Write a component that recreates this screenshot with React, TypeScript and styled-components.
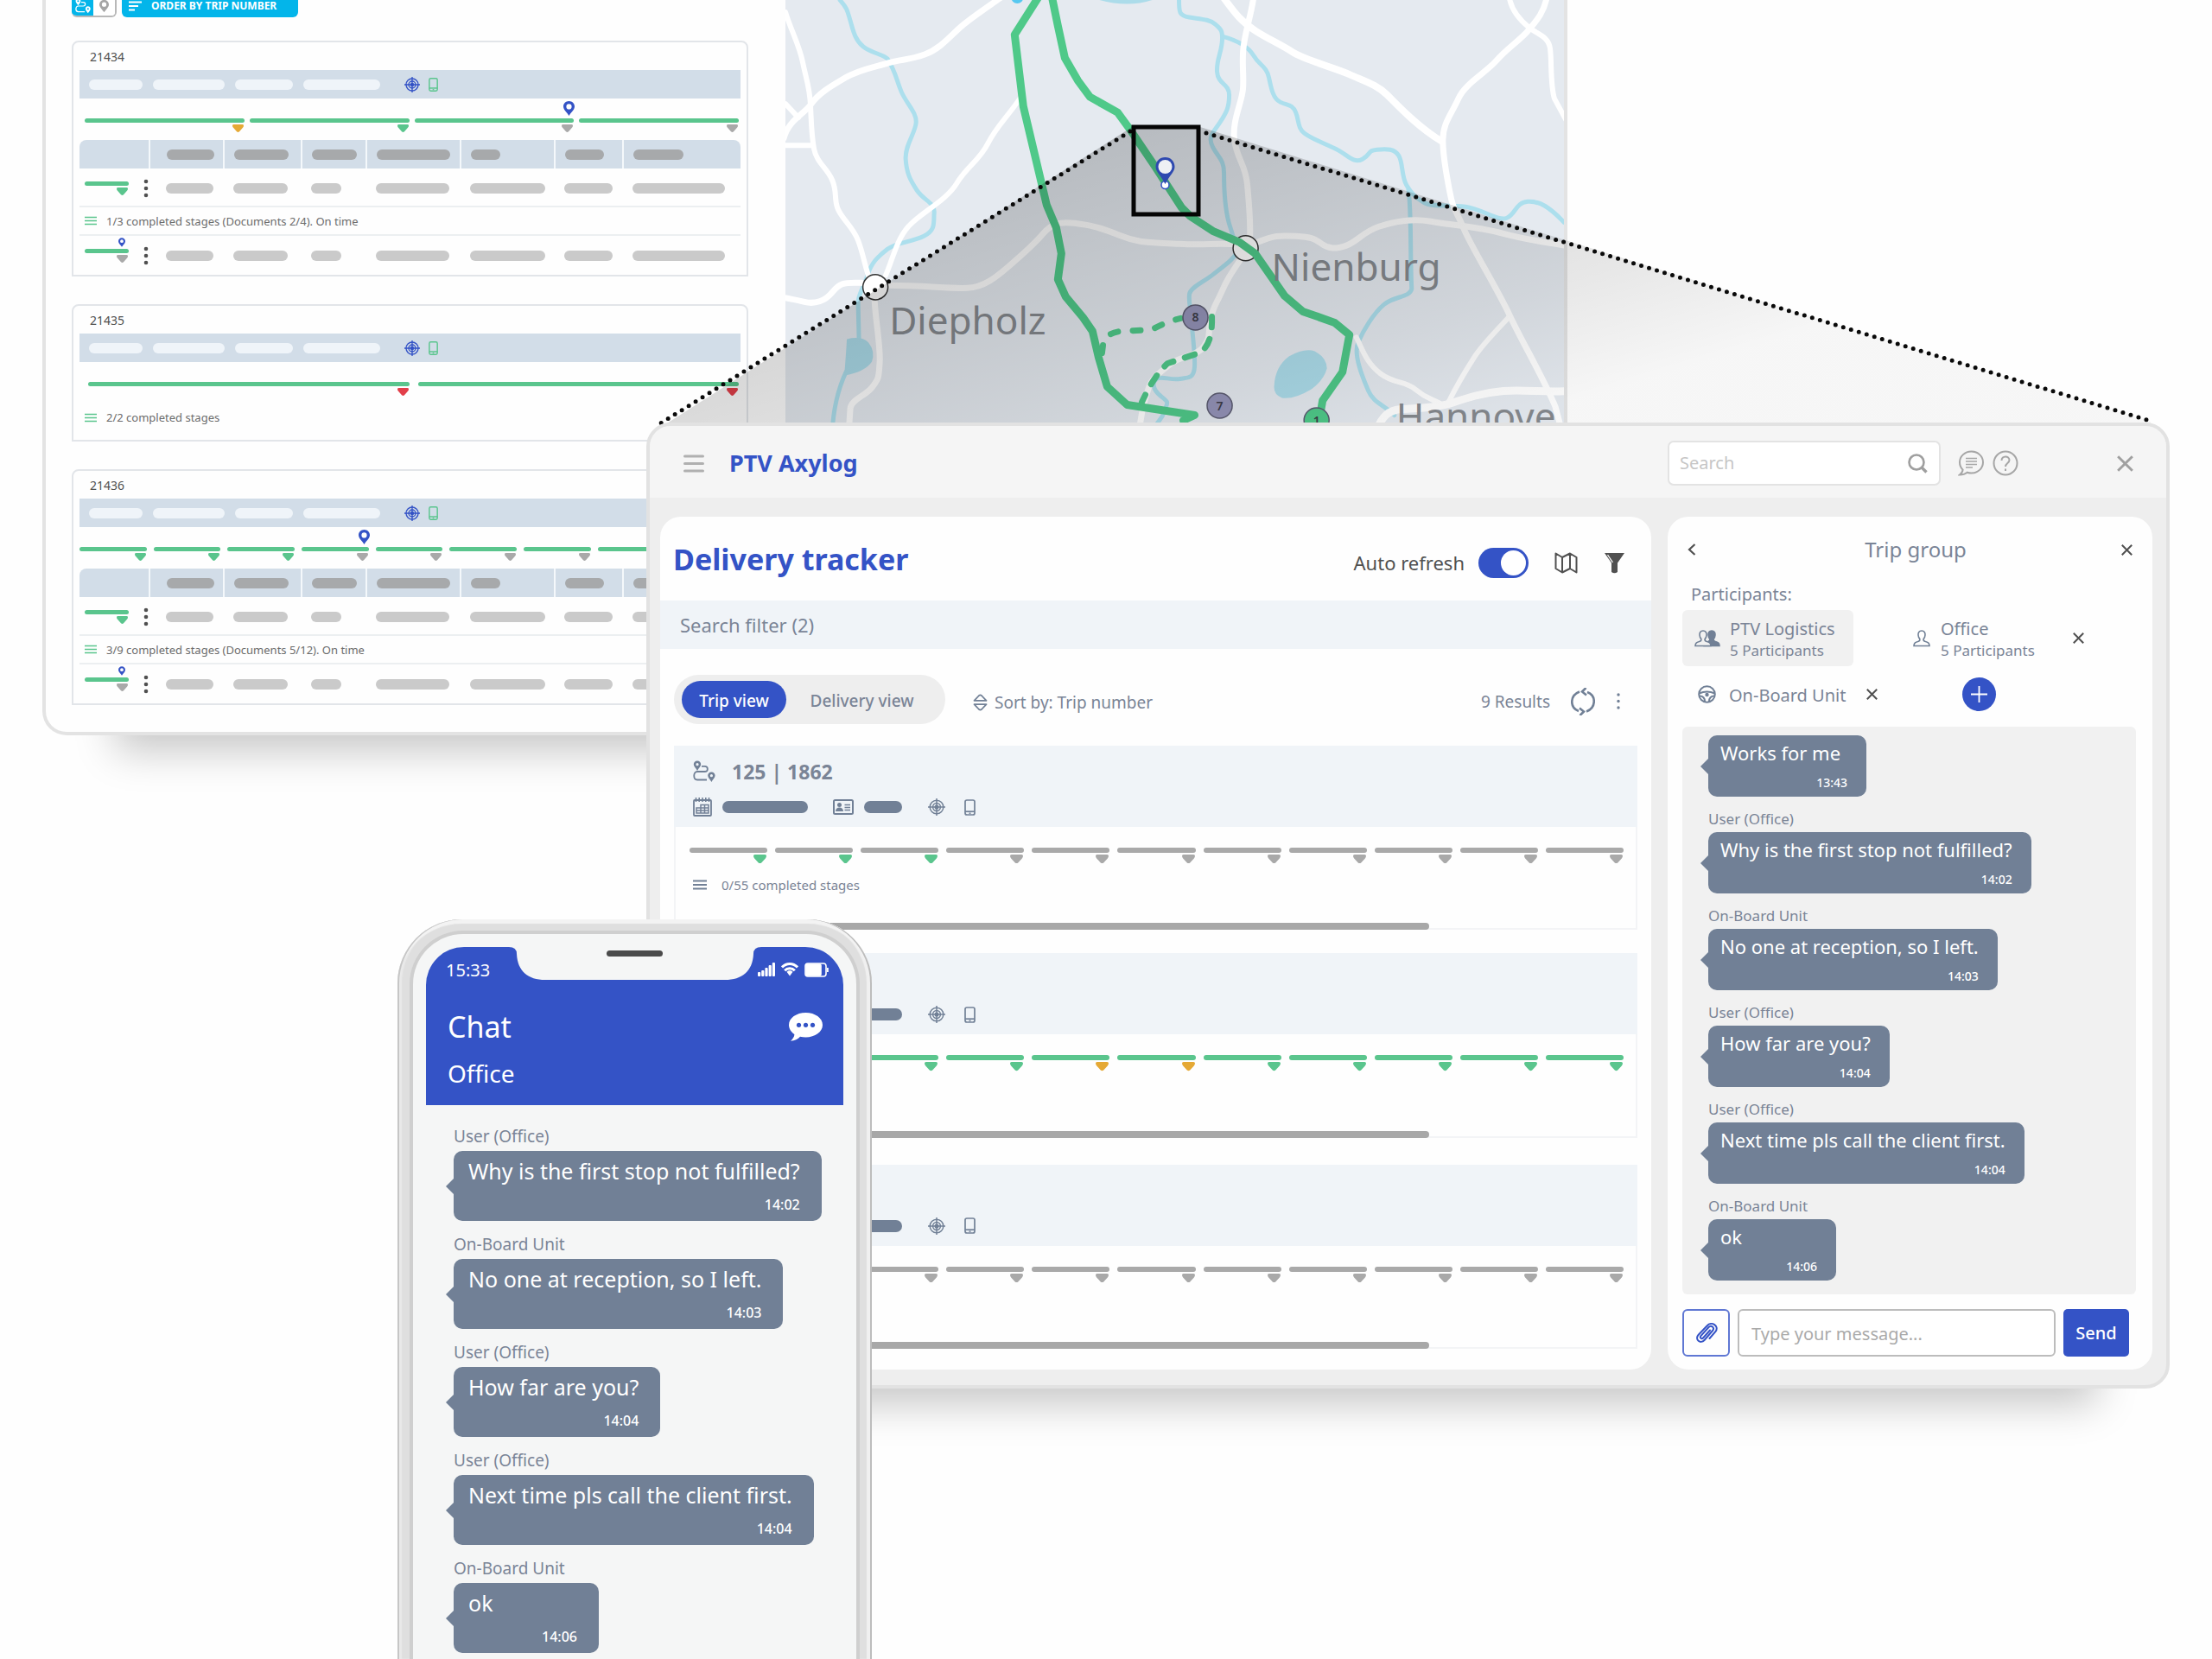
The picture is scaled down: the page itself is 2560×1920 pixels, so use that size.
import React from "react";
import styled, { createGlobalStyle, css } from "styled-components";

/* ---------- theme ---------- */

const color = {
  blue: "#3453c6",
  green: "#5ac58d",
  orange: "#e5a935",
  red: "#e23f4a",
  grey: "#a9a9a9",
  slate: "#718096",
  text: "#7a8496",
  dark: "#505050",
  band: "#d2dde8",
  pale: "#f0f4f8",
};

const GlobalStyle = createGlobalStyle`
  *, *::before, *::after { box-sizing: border-box; }
  body {
    margin: 0;
    background: #fefefe;
    font-family: "Noto Sans", "Open Sans", sans-serif;
    color: ${color.text};
  }
  button, input { font: inherit; color: inherit; }
  h1, h2, h3, p { margin: 0; font-size: inherit; font-weight: inherit; }
`;

const Stage = styled.main`
  position: relative;
  min-height: 100vh;
  overflow: hidden;
`;

const IconButton = styled.button`
  display: inline-flex;
  align-items: center;
  justify-content: center;
  padding: 0;
  border: 0;
  background: none;
  cursor: pointer;
`;

/* ---------- icons ---------- */

type IconProps = { w?: number; h?: number; c?: string };

const Crosshair = ({ w = 18, c = color.slate }: IconProps) => (
  <svg width={w} height={w} viewBox="0 0 20 20" fill="none" stroke={c} strokeWidth="1.5">
    <circle cx="10" cy="10" r="7.8" />
    <circle cx="10" cy="10" r="4.4" />
    <path d="M10 0v20M0 10h20" />
    <circle cx="10" cy="10" r="1.8" fill={c} />
  </svg>
);

const PhoneIcon = ({ w = 13, h = 19, c = color.slate }: IconProps) => (
  <svg width={w} height={h} viewBox="0 0 13 19" fill="none" stroke={c} strokeWidth="1.7">
    <rect x="1" y="1" width="11" height="17" rx="2" />
    <path d="M1 14.2h11" />
    <path d="M5.5 16.2h2" strokeWidth="1.4" />
  </svg>
);

const Lines = ({ w = 16, h = 12, c = color.slate }: IconProps) => (
  <svg width={w} height={h} viewBox="0 0 16 12" fill="none" stroke={c} strokeWidth="1.8">
    <path d="M0 1.5h16M0 6h16M0 10.5h16" />
  </svg>
);

const MarkerShape = ({ w = 13, c = color.grey }: IconProps) => (
  <svg width={w} height={(w * 9) / 13} viewBox="0 0 13 9" fill={c}>
    <path d="M1.5 0h10Q13 0 13 1.4q0 1.4-1 2.4L8 8.2Q6.500 9.600 5 8.200L1 3.800Q0 2.800 0 1.400 0 0 1.500 0z" />
  </svg>
);

const Pin = ({ w = 13, h = 17, c = color.blue }: IconProps) => (
  <svg width={w} height={h} viewBox="0 0 13 17">
    <path
      fill={c}
      fillRule="evenodd"
      d="M6.500 0C2.900 0 0 2.800 0 6.300 0 10 4 13 6.500 17 9 13 13 10 13 6.300 13 2.800 10.100 0 6.500 0zm0 3.300a3.100 3.100 0 1 1 0 6.200 3.100 3.100 0 0 1 0-6.200z"
    />
  </svg>
);

const RouteIcon = ({ w = 26, c = color.slate }: IconProps) => (
  <svg width={w} height={w} viewBox="0 0 26 26" fill="none">
    <path
      fill={c}
      fillRule="evenodd"
      d="M5 .5C2.500.5.8 2.300.8 4.600.8 7 3.300 9 5 12c1.700-3 4.200-5 4.200-7.400C9.200 2.300 7.500.5 5 .5zm0 2.600a1.600 1.600 0 1 1 0 3.200 1.600 1.600 0 0 1 0-3.200zM21.400 13.500c-2.500 0-4.200 1.800-4.200 4.100 0 2.400 2.500 4.400 4.200 7.400 1.700-3 4.200-5 4.200-7.400 0-2.300-1.700-4.100-4.200-4.100zm0 2.600a1.600 1.600 0 1 1 0 3.200 1.600 1.600 0 0 1 0-3.200z"
    />
    <path stroke={c} strokeWidth="1.8" d="M10 6.800h3.500c4.500 0 4.500 6.200 0 6.200H5c-5 0-5 9.500 0 9.500h11" />
  </svg>
);

const CalendarIcon = () => (
  <svg width="22" height="22" viewBox="0 0 22 22" fill="none" stroke={color.slate}>
    <rect x="1" y="3" width="20" height="18" rx="1" strokeWidth="1.8" />
    <path d="M3.500 0v5M7.200 0v5M11 0v5M14.800 0v5M18.500 0v5" strokeWidth="1.600" />
    <path d="M4 12h5V8.500h9V18H4zM4 15h14M9 8.500V18M13.500 8.500V18M9 12h9" strokeWidth="1.500" />
  </svg>
);

const IdCardIcon = () => (
  <svg width="24" height="18" viewBox="0 0 24 18" fill="none" stroke={color.slate}>
    <rect x="1" y="1" width="22" height="16" rx="1.500" strokeWidth="2" />
    <circle cx="7.500" cy="6.500" r="2.500" fill={color.slate} stroke="none" />
    <path d="M3 14c0-3 2-4.500 4.500-4.500S12 11 12 14z" fill={color.slate} stroke="none" />
    <path d="M13.500 6.500H20M13.500 9.500H20M13.500 12.500H20" strokeWidth="1.500" />
  </svg>
);

const Cross = ({ w = 13, c = color.dark }: IconProps) => (
  <svg width={w} height={w} viewBox="0 0 13 13" fill="none" stroke={c} strokeWidth="2">
    <path d="M.8.8l11.400 11.400M12.200.8L.8 12.200" />
  </svg>
);

const person = "M11 1C8 1 6.800 3.200 7 6c.1 2 .9 3.500 1.900 4.600.3 1.600-.4 2.200-1.600 2.700C4 14.300 2 15 2 18.500h18c0-3.500-2-4.200-5.300-5.200-1.200-.5-1.900-1.100-1.600-2.700C14.100 9.500 14.900 8 15 6c.2-2.800-1-5-4-5z";

const PersonIcon = () => (
  <svg width="22" height="20" viewBox="0 0 22 20" fill="none" stroke={color.slate} strokeWidth="1.600">
    <path d={person} />
  </svg>
);

const GroupIcon = () => (
  <svg width="30" height="20" viewBox="0 0 30 20" stroke={color.slate} strokeWidth="1.600">
    <g transform="translate(9 0)" fill={color.slate}>
      <path d={person} />
    </g>
    <g transform="translate(-1 0)" fill="#f1f1f1">
      <path d={person} />
    </g>
  </svg>
);

const WheelIcon = () => (
  <svg width="21" height="21" viewBox="0 0 21 21" fill="none" stroke={color.slate} strokeWidth="2">
    <circle cx="10.500" cy="10.500" r="9.300" />
    <path d="M1.500 9.500C7 7.200 14 7.200 19.500 9.500M2 12.500c4.500 0 6 2 6 6.500M19 12.500c-4.500 0-6 2-6 6.500" />
    <circle cx="10.500" cy="11" r="2.200" fill={color.slate} stroke="none" />
  </svg>
);

/* ---------- background window ---------- */

const BackWindow = styled.section`
  position: absolute;
  top: -24px;
  left: 49px;
  right: 746px;
  display: flex;
  border: 4px solid #e3e3e3;
  border-top: 0;
  border-radius: 0 0 28px 28px;
  background: #fefefe;
  box-shadow: 0 102px 44px -84px rgba(0, 0, 0, 0.22);
`;

const OrderList = styled.div`
  flex: none;
  width: 856px;
  padding: 17px 43px 31px 30px;
`;

const OrderTools = styled.div`
  display: flex;
  gap: 6px;
  margin-bottom: 27px;
`;

const ModeSwitch = styled.div`
  display: flex;
  width: 52px;
  height: 27px;
  border: 2px solid #b8b8b8;
  border-left: 0;
  border-radius: 6px;
  overflow: hidden;
`;

const ModeButton = styled(IconButton)<{ $on?: boolean }>`
  flex: 1;
  background: ${(p) => (p.$on ? "#03b5ea" : "#fff")};
`;

const OrderButton = styled.button`
  display: flex;
  align-items: center;
  gap: 11px;
  width: 204px;
  height: 27px;
  padding: 0 8px;
  border: 0;
  border-radius: 6px;
  background: #03b5ea;
  color: #fff;
  font-size: 12px;
  font-weight: 700;
  white-space: nowrap;
`;

const OrderCard = styled.article`
  margin-bottom: 32px;
  padding: 0 7px;
  border: 2px solid #e2e5e9;
  border-radius: 8px 8px 0 0;
  &:last-child {
    margin-bottom: 0;
  }
`;

const OrderTitle = styled.h3`
  padding: 5px 0 3px 12px;
  font-size: 14px;
  line-height: 24px;
  color: ${color.dark};
`;

const OrderBand = styled.div`
  display: flex;
  align-items: center;
  gap: 10px;
  height: 33px;
  padding-left: 11px;
  background: ${color.band};
`;

const Pill = styled.span<{ $w: number; $c: string; $h?: number }>`
  display: block;
  flex: none;
  width: ${(p) => p.$w}px;
  height: ${(p) => p.$h ?? 12}px;
  border-radius: 7px;
  background: ${(p) => p.$c};
`;

const BandPills = styled.div`
  display: flex;
  gap: 12px;
  width: 355px;
`;

const Track = styled.div<{ $gap: number; $pad: string }>`
  display: flex;
  gap: ${(p) => p.$gap}px;
  padding: ${(p) => p.$pad};
`;

const Segment = styled.div`
  position: relative;
  flex: 1;
  display: flex;
  flex-direction: column;
  align-items: flex-end;
  gap: 2px;
  > svg {
    margin-right: 1px;
  }
`;

const Bar = styled.span<{ $c: string; $h: number }>`
  width: 100%;
  height: ${(p) => p.$h}px;
  border-radius: 3px;
  background: ${(p) => p.$c};
`;

const PinSpot = styled.span<{ $small?: boolean }>`
  position: absolute;
  right: ${(p) => (p.$small ? 4 : -1)}px;
  bottom: ${(p) => (p.$small ? 18 : 19)}px;
  line-height: 0;
`;

const StageTable = styled.table`
  width: 100%;
  table-layout: fixed;
  border-collapse: collapse;
  td,
  th {
    padding: 0 0 0 11px;
  }
  th:nth-child(2),
  td:nth-child(2) {
    padding-left: 19px;
  }
`;

const HeadRow = styled.tr`
  height: 33px;
  th {
    background: ${color.band};
    border-left: 2px solid #f4f8fb;
  }
  th:first-child {
    border-left: 0;
    border-top-left-radius: 8px;
  }
  th:last-child {
    border-top-right-radius: 8px;
  }
`;

const BodyRow = styled.tr<{ $h: number }>`
  height: ${(p) => p.$h}px;
  && td:first-child {
    padding-left: 6px;
  }
`;

const StageRow = styled(BodyRow)`
  td {
    padding-top: 3px;
  }
`;

const DividedRow = styled(BodyRow)`
  border-top: 2px solid #eceff1;
  border-bottom: 2px solid #eceff1;
`;

const MiniTrack = styled.div`
  display: flex;
  align-items: center;
  gap: 17px;
  > div {
    flex: none;
    width: 51px;
  }
`;

const StageText = styled.p`
  display: flex;
  align-items: center;
  gap: 11px;
  font-size: 13px;
  line-height: 30px;
  color: #6c6c6c;
`;

const StageTextPadded = styled(StageText)`
  padding: 1px 6px 11px;
`;

const Kebab = ({ c = color.dark, r = 2.3, h = 22 }: { c?: string; r?: number; h?: number }) => (
  <svg width="6" height={h} viewBox={`0 0 6 ${h}`} fill={c}>
    <circle cx="3" cy="3" r={r} />
    <circle cx="3" cy={h / 2} r={r} />
    <circle cx="3" cy={h - 3} r={r} />
  </svg>
);

type Mark = { c: string; pin?: boolean };
const g: Mark = { c: color.green };
const n: Mark = { c: color.grey };

const headPills = [55, 63, 52, 85, 34, 45, 58];
const rowPills = [55, 63, 35, 85, 87, 56, 107];

const Stages = ({ label }: { label: string }) => (
  <StageTable>
    <colgroup>
      {[81, 86, 90, 75, 109, 109, 79].map((w, i) => (
        <col key={i} width={w} />
      ))}
      <col />
    </colgroup>
    <thead>
      <HeadRow>
        <th />
        {headPills.map((w, i) => (
          <th key={i}>
            <Pill $w={w} $c="#a7a9ab" />
          </th>
        ))}
      </HeadRow>
    </thead>
    <tbody>
      <StageRow $h={44}>
        <td>
          <MiniTrack>
            <Segment>
              <Bar $c={color.green} $h={5} />
              <MarkerShape c={color.green} />
            </Segment>
            <Kebab />
          </MiniTrack>
        </td>
        {rowPills.map((w, i) => (
          <td key={i}>
            <Pill $w={w} $c="#cacaca" />
          </td>
        ))}
      </StageRow>
      <DividedRow $h={33}>
        <td colSpan={8}>
          <StageText>
            <Lines w={14} h={11} c={color.green} />
            {label}
          </StageText>
        </td>
      </DividedRow>
      <BodyRow $h={46}>
        <td>
          <MiniTrack>
            <Segment>
              <PinSpot $small>
                <Pin w={8} h={11} />
              </PinSpot>
              <Bar $c={color.green} $h={5} />
              <MarkerShape />
            </Segment>
            <Kebab />
          </MiniTrack>
        </td>
        {rowPills.map((w, i) => (
          <td key={i}>
            <Pill $w={w} $c="#cacaca" />
          </td>
        ))}
      </BodyRow>
    </tbody>
  </StageTable>
);

type OrderProps = {
  id: string;
  label: string;
  marks: Mark[];
  gap: number;
  pad: string;
  table?: boolean;
};

const Order = ({ id, label, marks, gap, pad, table }: OrderProps) => (
  <OrderCard>
    <OrderTitle>{id}</OrderTitle>
    <OrderBand>
      <BandPills>
        {[62, 83, 67, 89].map((w) => (
          <Pill key={w} $w={w} $c="#eff4f9" />
        ))}
      </BandPills>
      <Crosshair w={18} c={color.blue} />
      <PhoneIcon w={11} h={18} c={color.green} />
    </OrderBand>
    <Track $gap={gap} $pad={pad}>
      {marks.map((m, i) => (
        <Segment key={i}>
          {m.pin && (
            <PinSpot>
              <Pin />
            </PinSpot>
          )}
          <Bar $c={color.green} $h={5} />
          <MarkerShape c={m.c} />
        </Segment>
      ))}
    </Track>
    {table ? (
      <Stages label={label} />
    ) : (
      <StageTextPadded>
        <Lines w={14} h={11} c={color.green} />
        {label}
      </StageTextPadded>
    )}
  </OrderCard>
);

const MapPane = styled.div`
  flex: 1;
  min-width: 0;
  position: relative;
  overflow: hidden;
  border-bottom-right-radius: 24px;
  background: #e5eaf0;
  svg {
    display: block;
    margin-top: 24px;
    width: 100%;
  }
`;

const RegionMap = () => (
  <MapPane>
    <svg viewBox="0 0 900 500" fill="none" strokeLinecap="round" strokeLinejoin="round">
      <g stroke="#acdfed" strokeWidth="5">
        <path d="M63 0C72 10 72 14 75 24S80 46 90 54 112 62 118 68C128 84 128 92 134 106S152 130 151 142 138 168 139 184 144 208 152 220 173 234 172 246 174 266 160 273 128 280 118 288 100 302 95 318 84 340 84 350L85 393M70 430Q56 460 54 500" />
        <path d="M455 0C455 14 455 18 467 20S490 22 497 28 505 36 505 44C505 60 498 68 499 83S513 96 513 110 510 130 502 142 488 158 494 170 507 184 507 200 508 244 514 262 518 278 524 286C520 300 508 306 496 316S468 332 467 340 468 354 469 368 474 410 473 424 466 436 456 438 434 434 429 438 424 450 434 458 442 464 438 476 428 486 426 500" />
        <path d="M505 42C520 46 534 52 541 64S556 76 559 90 564 114 572 118 586 120 590 130 592 148 600 154 618 164 634 171 656 190 667 184 672 174 684 173 704 172 709 180 712 204 718 214 728 228 738 234 766 236 786 239 824 256 834 252 844 234 858 233 884 240 900 257M720 218C724 240 722 300 724 334 722 344 704 342 692 352S668 382 662 396 668 438 674 452 692 468 704 480" />
      </g>
      <g fill="#acdcea">
        <path d="M71 392Q88 388 96 396 104 406 100 418 92 430 68 434 70 410 71 392z" />
        <path d="M565 446Q566 424 582 412 600 402 612 406 626 414 626 426 622 440 608 450 588 462 574 460 564 456 565 446z" />
        <path d="M363 0H424Q396 9 363 0z" />
        <circle cx="268" cy="-3" r="7" fill="#57c8f0" />
      </g>
      <g stroke="#fff" strokeWidth="7">
        <path d="M248-2C228 12 216 20 204 30S180 56 161 63 134 68 118 73 86 80 69 90 38 108 30 120 4 138-2 160" />
        <path d="M0 14C6 34 16 52 20 72S28 100 29 122 30 156 33 172 48 194 54 208 56 228 60 240 78 262 84 278 92 308 97 322" strokeWidth="6" />
        <path d="M0 168H32M0 120L15 136" strokeWidth="6" />
        <path d="M116 318C124 300 128 278 142 262S186 232 198 212 224 186 234 166 256 136 271 114" strokeWidth="6" />
        <path d="M88 327C66 326 62 328 54 338S34 352 22 349 8 346-2 344" />
        <path d="M118 330C160 330 190 334 210 333S244 320 258 308 288 282 298 270 318 256 334 258 362 262 386 272 424 280 456 282 500 280 524 283M546 280C564 272 572 272 590 273S612 276 620 282 636 288 648 284 668 268 686 262 724 252 746 256 800 262 830 270 880 280 902 284" />
        <path d="M103 346C104 370 110 400 109 418S108 438 100 448 76 462 75 472L73 502" />
        <path d="M541-2C538 20 530 40 529 60S530 86 529 102 516 140 519 162 532 190 534 214 538 256 537 276" />
        <path d="M526 300C514 318 510 324 504 338S494 354 491 372 492 388 484 400 456 412 446 420 424 436 420 448 410 480 409 502" />
        <path d="M507-2C520 16 528 26 544 36S570 50 586 60 634 78 652 86 684 98 696 110 730 146 758 163" strokeWidth="8" />
        <path d="M880-2C876 16 868 24 859 35S834 56 822 70 786 96 778 114 760 142 760 162 764 200 768 222 776 244 784 264 822 332 837 364 876 436 890 470L898 500" />
        <path d="M837-2C840 14 850 24 860 32S882 42 884 56 884 98 889 114L902 138" strokeWidth="6" />
        <path d="M837 366C822 382 806 398 797 412S774 450 767 464M660 390C668 406 672 420 688 432S716 440 728 450 744 460 756 466" strokeWidth="6" />
        <path d="M682 500C690 480 698 474 712 473S752 472 770 466 806 454 830 452 880 454 902 452" strokeWidth="9" />
      </g>
      <g stroke="#333" strokeWidth="1.500" fill="#fff">
        <circle cx="104" cy="332" r="14.500" />
        <circle cx="532" cy="287" r="14.500" />
      </g>
      <g stroke="#4fc989" strokeWidth="9">
        <path d="M308-4L315 30 323 67 338 93 352 112 384 130 400 152 427 192 458 240 468 250 494 267 525 280 543 293 577 342 598 360 635 373 652 387 644 430 621 463 617 486" />
        <path d="M293-4L265 40 275 123 302 237 313 263 319 293 315 323 324 343 344 367 355 383 362 413 372 447 395 468 473 480 460 486" />
        <path d="M366 408L368 392Q376 384 388 383L424 381Q440 372 457 368" strokeWidth="7" strokeDasharray="9 17" />
        <path d="M493 366Q494 400 478 408L442 420Q426 434 412 465" strokeWidth="7" strokeDasharray="12 14" />
      </g>
      <g stroke="#5c5c72" strokeWidth="1.500" fill="#9493b8">
        <circle cx="474" cy="367" r="14.500" />
        <circle cx="502" cy="469" r="14.500" />
        <circle cx="614" cy="486" r="14.500" fill="#4fc989" />
      </g>
      <g fill="#3c3c48" fontSize="14" fontWeight="600" textAnchor="middle">
        <text x="474" y="372">8</text>
        <text x="502" y="474">7</text>
        <text x="614" y="491">1</text>
      </g>
      <g fill="#85898e" fontSize="44">
        <text x="120" y="387">Diepholz</text>
        <text x="562" y="325">Nienburg</text>
        <text x="706" y="497">Hannove</text>
      </g>
    </svg>
  </MapPane>
);

/* Magnifier cone joining the map to the front window */

const ConeLayer = styled.svg`
  position: absolute;
  top: 140px;
  left: 748px;
  width: calc(100% - 797px);
  pointer-events: none;
`;

const Cone = () => (
  <ConeLayer viewBox="0 0 1763 360" fill="none">
    <defs>
      <linearGradient id="cone" gradientUnits="userSpaceOnUse" x1="560" y1="8" x2="690" y2="440">
        <stop offset="0" stopOpacity="0.2" />
        <stop offset="0.7" stopOpacity="0.09" />
        <stop offset="1" stopOpacity="0.03" />
      </linearGradient>
    </defs>
    <path d="M562 7h79L1741 348v12H8z" fill="url(#cone)" />
    <g stroke="#0a0a0a" strokeWidth="5" strokeLinecap="round">
      <path d="M560 12L10 354" strokeDasharray="0 9.400" />
      <path d="M648 14L1740 347" strokeDasharray="0 9.400" />
    </g>
    <rect x="564" y="7" width="75" height="101" stroke="#050505" strokeWidth="5" />
    <circle cx="600.500" cy="74" r="4.500" fill="#fff" stroke={color.blue} strokeWidth="1.500" />
    <path
      d="M600.500 42c-6.500 0-11 4.800-11 11 0 6 6 10 11 20 5-10 11-14 11-20 0-6.200-4.500-11-11-11z"
      fill="#2e49b0"
    />
    <circle cx="600.500" cy="53" r="8" fill="#eef0f4" />
  </ConeLayer>
);

/* ---------- front window ---------- */

const FrontWindow = styled.section`
  position: absolute;
  top: 489px;
  left: 748px;
  right: 49px;
  border: 4px solid #e2e2e2;
  border-radius: 28px;
  background: #eee;
  box-shadow: 0 102px 44px -84px rgba(0, 0, 0, 0.22);
`;

const AppBar = styled.header`
  display: flex;
  align-items: center;
  height: 83px;
  padding: 3px 38px 0 39px;
  border-radius: 24px 24px 0 0;
  background: #f5f5f5;
`;

const Brand = styled.h1`
  flex: 1;
  padding-left: 29px;
  font-size: 27px;
  font-weight: 700;
  line-height: 40px;
  color: ${color.blue};
`;

const SearchBox = styled.label`
  display: flex;
  align-items: center;
  width: 316px;
  height: 52px;
  margin-right: 20px;
  padding: 0 13px 0 12px;
  border: 2px solid #e3e3e3;
  border-radius: 7px;
  background: #fff;
`;

const PlainInput = styled.input`
  flex: 1;
  min-width: 0;
  padding: 0;
  border: 0;
  outline: 0;
  background: none;
  font-size: 20px;
  line-height: 28px;
  &::placeholder {
    color: #c6c6c6;
    opacity: 1;
  }
`;

const BarIcons = styled.div`
  display: flex;
  gap: 10px;
  margin-right: 114px;
`;

const WindowBody = styled.div`
  display: grid;
  grid-template-columns: minmax(0, 1fr) 561px;
  gap: 19px;
  padding: 22px 16px 18px 12px;
`;

const Panel = styled.section`
  border-radius: 24px;
  background: #fefefe;
`;

const TrackerPanel = styled(Panel)`
  padding-bottom: 24px;
`;

const PanelHead = styled.div`
  display: flex;
  align-items: center;
  height: 97px;
  padding: 0 30px 0 15px;
`;

const PanelTitle = styled.h2`
  flex: 1;
  font-size: 34px;
  font-weight: 700;
  line-height: 48px;
  color: ${color.blue};
`;

const HeadTools = styled.div`
  display: flex;
  align-items: center;
  padding-top: 9px;
  color: ${color.dark};
`;

const SwitchLabel = styled.label`
  display: flex;
  align-items: center;
  gap: 16px;
  margin-right: 30px;
  font-size: 22px;
  line-height: 30px;
`;

const Switch = styled.input`
  appearance: none;
  position: relative;
  width: 58px;
  height: 35px;
  margin: 0;
  border-radius: 18px;
  background: ${color.blue};
  &::after {
    content: "";
    position: absolute;
    top: 3px;
    right: 3px;
    width: 29px;
    height: 29px;
    border-radius: 50%;
    background: #fff;
  }
`;

const FilterButton = styled(IconButton)`
  margin-left: 30px;
`;

const FilterBar = styled.div`
  height: 56px;
  padding-left: 23px;
  background: ${color.pale};
  font-size: 22px;
  line-height: 56px;
`;

const ViewBar = styled.div`
  display: flex;
  align-items: center;
  margin: 30px 35px 25px 16px;
  font-size: 19px;
  line-height: 28px;
`;

const Segmented = styled.div`
  display: flex;
  align-items: center;
  width: 314px;
  height: 57px;
  padding: 0 9px;
  border-radius: 29px;
  background: #eee;
`;

const ViewButton = styled.button<{ $on?: boolean }>`
  width: ${(p) => (p.$on ? 121 : 175)}px;
  height: 43px;
  padding: 2px 0 0;
  border: 0;
  border-radius: 22px;
  background: ${(p) => (p.$on ? color.blue : "transparent")};
  color: ${(p) => (p.$on ? "#fff" : color.text)};
  font-weight: 500;
`;

const SortButton = styled.button`
  display: flex;
  align-items: center;
  gap: 8px;
  margin: 0 auto 0 32px;
  padding: 6px 0 0;
  border: 0;
  background: none;
`;

const ResultTools = styled.div`
  display: flex;
  align-items: center;
  gap: 24px;
  padding-top: 4px;
`;

const TripCard = styled.article`
  margin: 0 16px 27px;
  &:last-child {
    margin: 31px 16px 0;
  }
`;

const TripHead = styled.div`
  display: flex;
  flex-direction: column;
  gap: 13px;
  height: 94px;
  padding: 14px 22px 11px;
  background: ${color.pale};
`;

const TripTitle = styled.h3`
  display: flex;
  align-items: center;
  gap: 19px;
  height: 32px;
  font-size: 23px;
  font-weight: 700;
  line-height: 32px;
`;

const TripMeta = styled.div`
  display: flex;
  align-items: center;
  height: 24px;
`;

const MetaItem = styled.span<{ $gap: number }>`
  display: flex;
  align-items: center;
  gap: 12px;
  margin-right: ${(p) => p.$gap}px;
`;

const TripBody = styled.div`
  border: solid #f3f4f6;
  border-width: 0 2px;
`;

const TripStages = styled.p`
  display: flex;
  align-items: center;
  gap: 17px;
  height: 20px;
  margin: 15px 20px 34px;
  font-size: 15px;
  line-height: 20px;
`;

const Scroller = styled.div`
  height: 8px;
  border-bottom: 2px solid #f3f4f6;
  &::before {
    content: "";
    display: block;
    width: 78.5%;
    height: 8px;
    border-radius: 4px;
    background: #a8a8a8;
  }
`;

type TripProps = { title?: string; label?: string; bar: string; marks: string[] };

const Trip = ({ title, label, bar, marks }: TripProps) => (
  <TripCard>
    <TripHead>
      <TripTitle>
        <RouteIcon />
        {title}
      </TripTitle>
      <TripMeta>
        <MetaItem $gap={29}>
          <CalendarIcon />
          <Pill $w={99} $h={14} $c={color.slate} />
        </MetaItem>
        <MetaItem $gap={30}>
          <IdCardIcon />
          <Pill $w={44} $h={14} $c={color.slate} />
        </MetaItem>
        <MetaItem $gap={22}>
          <Crosshair w={20} />
        </MetaItem>
        <PhoneIcon />
      </TripMeta>
    </TripHead>
    <TripBody>
      <Track $gap={9} $pad="24px 14px 0 16px">
        {marks.map((c, i) => (
          <Segment key={i}>
            <Bar $c={bar} $h={6} />
            <MarkerShape w={15} c={c} />
          </Segment>
        ))}
      </Track>
      <TripStages>
        <Lines />
        {label}
      </TripStages>
      <Scroller />
    </TripBody>
  </TripCard>
);

/* ---------- messages ---------- */

const MessageList = styled.ol<{ $pad: string }>`
  display: flex;
  flex-direction: column;
  gap: 14px;
  margin: 0;
  padding: ${(p) => p.$pad};
  list-style: none;
`;

const Message = styled.li`
  display: flex;
  flex-direction: column;
  align-items: flex-start;
`;

const Sender = styled.span<{ $big?: boolean }>`
  ${(p) =>
    p.$big
      ? css`
          margin-bottom: 4px;
          font-size: 19px;
          line-height: 26px;
        `
      : css`
          margin-bottom: 3px;
          font-size: 17px;
          line-height: 24px;
        `}
`;

const Bubble = styled.div<{ $big?: boolean; $min?: number }>`
  position: relative;
  display: flex;
  flex-direction: column;
  min-width: ${(p) => p.$min ?? (p.$big ? 168 : 148)}px;
  border-radius: 10px;
  background: ${color.slate};
  color: #fff;
  white-space: nowrap;
  ${(p) =>
    p.$big
      ? css`
          gap: 12px;
          padding: 7px 25px 8px 17px;
          font-size: 25px;
          line-height: 32px;
        `
      : css`
          gap: 11px;
          padding: 6px 22px 6px 14px;
          font-size: 22px;
          line-height: 28px;
        `}
  &::before {
    content: "";
    position: absolute;
    left: -9px;
    top: 50%;
    margin-top: -9px;
    border: solid transparent;
    border-width: 9px 9px 9px 0;
    border-right-color: ${color.slate};
  }
`;

const Time = styled.time<{ $big?: boolean }>`
  align-self: flex-end;
  font-size: ${(p) => (p.$big ? 16 : 14)}px;
  line-height: ${(p) => (p.$big ? 22 : 20)}px;
  font-weight: 500;
`;

type Msg = { from?: string; text: string; at: string; min?: number };

const thread: Msg[] = [
  { from: "User (Office)", text: "Why is the first stop not fulfilled?", at: "14:02" },
  { from: "On-Board Unit", text: "No one at reception, so I left.", at: "14:03" },
  { from: "User (Office)", text: "How far are you?", at: "14:04" },
  { from: "User (Office)", text: "Next time pls call the client first.", at: "14:04" },
  { from: "On-Board Unit", text: "ok", at: "14:06" },
];

const Thread = ({ items, big, pad }: { items: Msg[]; big?: boolean; pad: string }) => (
  <MessageList $pad={pad}>
    {items.map((m, i) => (
      <Message key={i}>
        {m.from && <Sender $big={big}>{m.from}</Sender>}
        <Bubble $big={big} $min={m.min}>
          {m.text}
          <Time $big={big}>{m.at}</Time>
        </Bubble>
      </Message>
    ))}
  </MessageList>
);

/* ---------- chat panel ---------- */

const ChatPanel = styled(Panel)`
  display: flex;
  flex-direction: column;
  padding: 21px 19px 15px 17px;
`;

const ChatHead = styled.div`
  display: flex;
  align-items: center;
  height: 34px;
  margin-bottom: 22px;
  padding: 0 4px 0 6px;
`;

const ChatTitle = styled.h2`
  flex: 1;
  padding-left: 16px;
  font-size: 24px;
  line-height: 34px;
  text-align: center;
`;

const ChatLabel = styled.p`
  padding-left: 10px;
  margin-bottom: 5px;
  font-size: 20px;
  line-height: 26px;
`;

const People = styled.div`
  display: grid;
  grid-template-columns: 252px 1fr;
  row-gap: 13px;
  align-items: center;
  margin-bottom: 18px;
`;

const Participant = styled.div<{ $on?: boolean; $gap: number }>`
  display: flex;
  align-items: center;
  width: max-content;
  padding: 0 21px 0 14px;
  border-radius: 6px;
  background: ${(p) => (p.$on ? "#f1f1f1" : "none")};
  > svg {
    flex: none;
    margin-right: 11px;
  }
  > button {
    margin-left: ${(p) => p.$gap}px;
  }
`;

const Slot = styled.span`
  display: flex;
  justify-content: center;
  width: 28px;
  margin-right: 12px;
`;

const PersonName = styled.span<{ $tall?: boolean }>`
  display: flex;
  flex-direction: column;
  padding: ${(p) => (p.$tall ? "8px 0 7px" : "2px 0 0")};
  font-size: 20px;
  line-height: 27px;
  small {
    font-size: 17px;
    line-height: 23px;
  }
`;

const AddButton = styled(IconButton)`
  width: 39px;
  height: 39px;
  margin-left: 72px;
  border-radius: 50%;
  background: ${color.blue};
`;

const Log = styled.div`
  flex: 1;
  margin-bottom: 17px;
  border-radius: 6px;
  background: #f1f1f1;
`;

const Composer = styled.form`
  display: flex;
  gap: 9px;
  height: 55px;
  margin-right: 8px;
`;

const AttachButton = styled(IconButton)`
  width: 55px;
  border: 2px solid #5f77d3;
  border-radius: 6px;
`;

const MessageInput = styled(PlainInput)`
  padding: 3px 14px 0;
  border: 2px solid #bcbcbc;
  border-radius: 6px;
  background: #fff;
  &::placeholder {
    color: #aaa;
  }
`;

const SendButton = styled.button`
  width: 76px;
  padding: 0;
  border: 0;
  border-radius: 5px;
  background: ${color.blue};
  color: #fff;
  font-size: 20px;
  font-weight: 500;
`;

const TripGroup = () => (
  <ChatPanel>
    <ChatHead>
      <IconButton aria-label="Back">
        <svg width="10" height="14" viewBox="0 0 10 14" fill="none" stroke={color.dark} strokeWidth="2.200">
          <path d="M8.500 1L2 7l6.500 6" />
        </svg>
      </IconButton>
      <ChatTitle>Trip group</ChatTitle>
      <IconButton aria-label="Close">
        <Cross />
      </IconButton>
    </ChatHead>
    <ChatLabel>Participants:</ChatLabel>
    <People>
      <Participant $on $gap={0}>
        <GroupIcon />
        <PersonName $tall>
          PTV Logistics
          <small>5 Participants</small>
        </PersonName>
      </Participant>
      <Participant $gap={44}>
        <PersonIcon />
        <PersonName $tall>
          Office
          <small>5 Participants</small>
        </PersonName>
        <IconButton aria-label="Remove Office">
          <Cross />
        </IconButton>
      </Participant>
      <Participant $gap={24}>
        <Slot>
          <WheelIcon />
        </Slot>
        <PersonName>On-Board Unit</PersonName>
        <IconButton aria-label="Remove On-Board Unit">
          <Cross />
        </IconButton>
      </Participant>
      <AddButton aria-label="Add participant">
        <svg width="19" height="19" viewBox="0 0 19 19" stroke="#fff" strokeWidth="1.800">
          <path d="M9.500 0v19M0 9.500h19" />
        </svg>
      </AddButton>
    </People>
    <Log>
      <Thread
        pad="10px 30px 15px 30px"
        items={[{ text: "Works for me", at: "13:43", min: 183 }, ...thread]}
      />
    </Log>
    <Composer onSubmit={(e) => e.preventDefault()}>
      <AttachButton type="button" aria-label="Attach file">
        <svg width="26" height="26" viewBox="0 0 26 26" fill="none" stroke={color.blue} strokeWidth="2" strokeLinecap="round">
          <path d="M17 9.500l-8 9c-1.600 1.800-4.200-.4-2.600-2.300L15.500 6c3-3.200 7.300.7 4.500 4L10.500 21c-4.500 5-11.500-1-7-6L13.500 4.500C19-1.500 28 4.500 23.500 11L16.500 19" />
        </svg>
      </AttachButton>
      <MessageInput placeholder="Type your message..." aria-label="Message" />
      <SendButton type="submit">Send</SendButton>
    </Composer>
  </ChatPanel>
);

/* ---------- phone ---------- */

const PhoneBody = styled.section`
  position: absolute;
  top: 1064px;
  bottom: 0;
  left: 460px;
  width: 549px;
  padding: 17px 18px 0;
  border-radius: 74px 74px 0 0;
  background: #dfdfdf;
  box-shadow: inset 2px 0 0 #c6c6c6, inset -2px 0 0 #bdbdbd, inset 0 5px 1px #f3f3f3, inset -6px 0 1px #f0f0f0,
    inset 5px 0 1px #e9e9e9;
  overflow: hidden;
`;

const Bezel = styled.div`
  height: 100%;
  padding: 15px 15px 0;
  border-radius: 58px 58px 0 0;
  background: #f5f6f6;
  box-shadow: 0 0 0 4px #cfcfcf;
`;

const PhoneHead = styled.header`
  position: relative;
  padding-bottom: 19px;
  border-radius: 44px 44px 0 0;
  background: ${color.blue};
  color: #fff;
`;

const StatusBar = styled.div`
  display: flex;
  align-items: center;
  justify-content: space-between;
  height: 52px;
  padding: 0 17px 0 23px;
  font-size: 20px;
`;

const StatusIcons = styled.div`
  display: flex;
  align-items: center;
  gap: 7px;
`;

const Notch = styled.svg`
  position: absolute;
  top: 0;
  left: 96px;
`;

const PhoneTitle = styled.div`
  display: flex;
  align-items: center;
  justify-content: space-between;
  margin-top: 16px;
  padding: 0 24px 0 25px;
  font-size: 34px;
  line-height: 48px;
`;

const PhoneSubtitle = styled.p`
  margin-top: 12px;
  padding-left: 25px;
  font-size: 28px;
  line-height: 36px;
`;

const PhoneChat = () => (
  <PhoneBody>
    <Bezel>
      <PhoneHead>
        <Notch width="292" height="38" viewBox="0 0 292 38">
          <path d="M0 0Q9 0 9 8C10 28 22 38 42 38H250C270 38 282 28 283 8Q283 0 292 0z" fill="#f5f6f6" />
          <rect x="113" y="4" width="65" height="7" rx="3.500" fill="#4b4b4b" />
        </Notch>
        <StatusBar>
          <span>15:33</span>
          <StatusIcons>
            <svg width="20" height="16" viewBox="0 0 20 16" fill="#fff">
              <rect x="0" y="11" width="3.200" height="5" rx="1" />
              <rect x="4.200" y="9" width="3.200" height="7" rx="1" />
              <rect x="8.400" y="6" width="3.200" height="10" rx="1" />
              <rect x="12.600" y="3" width="3.200" height="13" rx="1" />
              <rect x="16.800" y="0" width="3.200" height="16" rx="1" />
            </svg>
            <svg width="20" height="16" viewBox="0 0 20 16" fill="none" stroke="#fff" strokeWidth="3">
              <path d="M1 5.500C6 .2 14 .2 19 5.500M4.200 9.300C7.500 5.800 12.500 5.800 15.800 9.300" />
              <path d="M10 9.300c-1.500 0-2.600.6-3.500 1.500L10 15.500l3.500-4.700c-.9-.9-2-1.500-3.500-1.500z" fill="#fff" stroke="none" />
            </svg>
            <svg width="28" height="17" viewBox="0 0 28 17" fill="none" stroke="#fff" strokeWidth="1.600">
              <rect x="1" y="1" width="24" height="15" rx="3" />
              <rect x="2" y="2" width="17" height="13" rx="1.500" fill="#fff" />
              <path d="M26.800 6v5" strokeWidth="2" />
            </svg>
          </StatusIcons>
        </StatusBar>
        <PhoneTitle>
          <h2>Chat</h2>
          <svg width="39" height="33" viewBox="0 0 39 33">
            <path
              d="M19.500 0C8.700 0 0 6.200 0 14.200c0 4.300 2.500 8 6.400 10.700C6.300 28 4.500 30 2 32.800c4.500-.2 8.500-2.400 11-5.100 2 .5 4.200.7 6.500.7 10.800 0 19.500-6.200 19.500-14.200S30.300 0 19.500 0z"
              fill="#fff"
            />
            <g fill={color.blue}>
              <circle cx="11.500" cy="14.300" r="2.600" />
              <circle cx="19.500" cy="14.300" r="2.600" />
              <circle cx="27.500" cy="14.300" r="2.600" />
            </g>
          </svg>
        </PhoneTitle>
        <PhoneSubtitle>Office</PhoneSubtitle>
      </PhoneHead>
      <Thread big pad="23px 15px 20px 32px" items={thread} />
    </Bezel>
  </PhoneBody>
);

/* ---------- page ---------- */

const times = (k: number, c: string) => Array<string>(k).fill(c);

export default function App() {
  return (
    <>
      <GlobalStyle />
      <Stage>
        <BackWindow>
          <OrderList>
            <OrderTools>
              <ModeSwitch>
                <ModeButton $on aria-label="Route view">
                  <RouteIcon w={18} c="#fff" />
                </ModeButton>
                <ModeButton aria-label="Stop view">
                  <Pin w={11} h={16} c="#a5a5a5" />
                </ModeButton>
              </ModeSwitch>
              <OrderButton>
                <svg width="15" height="12" viewBox="0 0 15 12" stroke="#fff" strokeWidth="2">
                  <path d="M0 1.500h15M0 6h11M0 10.500h7" />
                </svg>
                ORDER BY TRIP NUMBER
              </OrderButton>
            </OrderTools>
            <Order
              id="21434"
              label="1/3 completed stages (Documents 2/4). On time"
              marks={[{ c: color.orange }, g, { ...n, pin: true }, n]}
              gap={6}
              pad="23px 2px 9px 6px"
              table
            />
            <Order
              id="21435"
              label="2/2 completed stages"
              marks={[{ c: color.red }, { c: color.red }]}
              gap={10}
              pad="23px 2px 9px 10px"
            />
            <Order
              id="21436"
              label="3/9 completed stages (Documents 5/12). On time"
              marks={[g, g, g, { ...n, pin: true }, n, n, n, n, n]}
              gap={8}
              pad="23px 2px 9px 0"
              table
            />
          </OrderList>
          <RegionMap />
        </BackWindow>

        <Cone />

        <FrontWindow>
          <AppBar>
            <IconButton aria-label="Menu">
              <svg width="24" height="21" viewBox="0 0 24 21" stroke="#b0b0b0" strokeWidth="3" strokeLinecap="round">
                <path d="M1.500 2h21M1.500 10.500h21M1.500 19h21" />
              </svg>
            </IconButton>
            <Brand>PTV Axylog</Brand>
            <SearchBox>
              <PlainInput type="text" placeholder="Search" aria-label="Search" />
              <svg width="23" height="23" viewBox="0 0 23 23" fill="none" stroke="#9f9f9f" strokeWidth="2.600">
                <circle cx="10" cy="10" r="8.500" />
                <path d="M16 16l5.500 5.500" strokeWidth="3.400" />
              </svg>
            </SearchBox>
            <BarIcons>
              <IconButton aria-label="Messages">
                <svg width="30" height="30" viewBox="0 0 30 30" fill="none" stroke="#a6a6a6" strokeWidth="2">
                  <path d="M15.500 1.500C8 1.500 2 7 2 14c0 3.500 1.400 6.500 3.600 8.700C5.400 25 4 27 2 28.500c3.500 0 6.500-1 8.700-2.800 1.500.5 3.100.8 4.800.8C23 26.500 29 21 29 14S23 1.500 15.500 1.500z" />
                  <path d="M9 9.500h13M9 13h13M9 16.500h13M9 20h8" strokeWidth="1.600" />
                </svg>
              </IconButton>
              <IconButton aria-label="Help">
                <svg width="30" height="30" viewBox="0 0 30 30" fill="none" stroke="#a6a6a6" strokeWidth="2">
                  <circle cx="15" cy="15" r="13.500" />
                  <path d="M10.500 12c0-6 9-6 9-.5 0 3.500-4.500 3.500-4.500 7.500M15 21.500v2.500" />
                </svg>
              </IconButton>
            </BarIcons>
            <IconButton aria-label="Close window">
              <Cross w={19} c="#a0a0a0" />
            </IconButton>
          </AppBar>
          <WindowBody>
            <TrackerPanel>
              <PanelHead>
                <PanelTitle>Delivery tracker</PanelTitle>
                <HeadTools>
                  <SwitchLabel>
                    Auto refresh
                    <Switch type="checkbox" role="switch" defaultChecked />
                  </SwitchLabel>
                  <IconButton aria-label="Show map">
                    <svg width="27" height="25" viewBox="0 0 27 25" fill="none" stroke={color.dark} strokeWidth="2" strokeLinejoin="round">
                      <path d="M1.500 1.500L9 6l9-4.500L25.500 6v17.500L18 19l-9 4.500L1.500 19zM9 6v17.500M18 1.500V19" />
                    </svg>
                  </IconButton>
                  <FilterButton aria-label="Filter">
                    <svg width="25" height="25" viewBox="0 0 25 25">
                      <path d="M1 1h23l-8 11.500V23q-3.500 2.500-7 0V12.500z" fill={color.dark} />
                      <path d="M4.500 3.200l6 8.600" stroke="#fff" strokeWidth="1.200" />
                    </svg>
                  </FilterButton>
                </HeadTools>
              </PanelHead>
              <FilterBar>Search filter (2)</FilterBar>
              <ViewBar>
                <Segmented>
                  <ViewButton $on>Trip view</ViewButton>
                  <ViewButton>Delivery view</ViewButton>
                </Segmented>
                <SortButton>
                  <svg width="17" height="20" viewBox="0 0 17 20" fill="none" stroke={color.slate} strokeWidth="1.800" strokeLinejoin="round">
                    <path d="M1.500 7.800L7 2q1.500-1.200 3 0l5.500 5.800zM1.500 12.200L7 18q1.500 1.200 3 0l5.500-5.800z" />
                  </svg>
                  Sort by: Trip number
                </SortButton>
                <ResultTools>
                  <span>9 Results</span>
                  <IconButton aria-label="Refresh">
                    <svg width="28" height="32" viewBox="0 0 28 32" fill="none" stroke={color.slate} strokeWidth="2.600">
                      <path d="M10 4.500C-1.500 9-1.500 23 9 27M18 27.500C29.500 23 29.500 9 19 5" />
                      <path d="M17.500 0L13 4.500l5 4M10.500 32l4.500-4.500-5-4" />
                    </svg>
                  </IconButton>
                  <IconButton aria-label="More">
                    <Kebab c={color.slate} r={1.7} h={21} />
                  </IconButton>
                </ResultTools>
              </ViewBar>
              <Trip
                title="125 | 1862"
                label="0/55 completed stages"
                bar={color.grey}
                marks={[...times(3, color.green), ...times(8, color.grey)]}
              />
              <Trip
                bar={color.green}
                marks={[...times(4, color.green), ...times(2, color.orange), ...times(5, color.green)]}
              />
              <Trip bar={color.grey} marks={times(11, color.grey)} />
            </TrackerPanel>
            <TripGroup />
          </WindowBody>
        </FrontWindow>

        <PhoneChat />
      </Stage>
    </>
  );
}
